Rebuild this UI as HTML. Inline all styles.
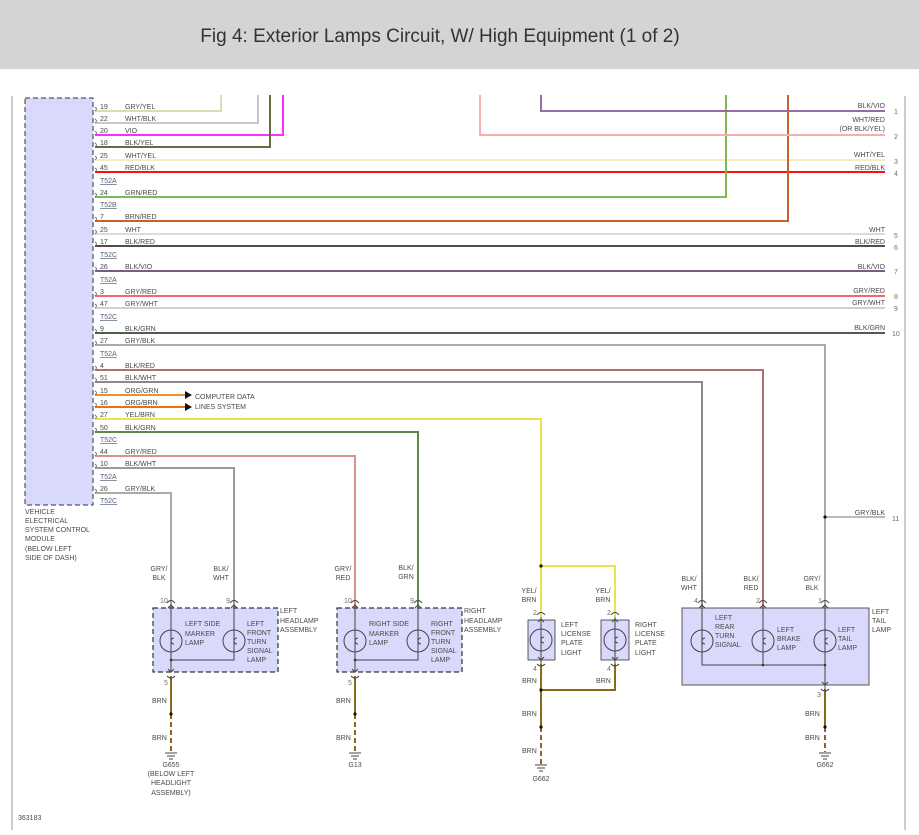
<!DOCTYPE html>
<html><head><meta charset="utf-8"><style>
html,body{margin:0;padding:0;background:#fff;}
svg{display:block;}
text{font-family:"Liberation Sans",sans-serif;font-size:7px;fill:#4a4a4a;}
.t{font-size:19px;fill:#333;}
.u{text-decoration:underline;fill:#55607a;}
.p{fill:#7a6a5a;}
</style></head><body>
<svg width="919" height="835" viewBox="0 0 919 835" xmlns="http://www.w3.org/2000/svg">
<rect x="0" y="0" width="919" height="69" fill="#d4d4d4"/>
<text class="t" x="440" y="42" text-anchor="middle">Fig 4: Exterior Lamps Circuit, W/ High Equipment (1 of 2)</text>
<line x1="12" y1="96" x2="12" y2="830" stroke="#bbb" stroke-width="1.5"/>
<line x1="905" y1="96" x2="905" y2="830" stroke="#bbb" stroke-width="1.5"/>
<rect x="25" y="98" width="68" height="407" fill="#d9d9fb" stroke="#333" stroke-width="1" stroke-dasharray="5,3"/>
<g fill="none" stroke-width="2">
<!-- top wires -->
<polyline points="95,111 221,111 221,95" stroke="#dcdcb4"/>
<polyline points="95,123 258,123 258,95" stroke="#c8c8c8"/>
<polyline points="95,135 283,135 283,95" stroke="#ff2cff"/>
<polyline points="95,147 270,147 270,95" stroke="#6a6a40"/>
<line x1="95" y1="160" x2="885" y2="160" stroke="#f2eec4"/>
<line x1="95" y1="172" x2="885" y2="172" stroke="#ff1010"/>
<polyline points="95,197 726,197 726,95" stroke="#7cba56"/>
<polyline points="95,221 788,221 788,95" stroke="#c8602c"/>
<line x1="95" y1="234" x2="885" y2="234" stroke="#dcdcdc"/>
<line x1="95" y1="246" x2="885" y2="246" stroke="#5a4a4a"/>
<line x1="95" y1="271" x2="885" y2="271" stroke="#7a5a88"/>
<line x1="95" y1="296" x2="885" y2="296" stroke="#f06868"/>
<line x1="95" y1="308" x2="885" y2="308" stroke="#d0d0d0"/>
<line x1="95" y1="333" x2="885" y2="333" stroke="#4e5e4e"/>
<polyline points="541,95 541,111 885,111" stroke="#9a6aa4"/>
<polyline points="480,95 480,135 885,135" stroke="#f4b0b0"/>
<polyline points="95,345 825,345 825,605" stroke="#aaa"/>
<polyline points="825,517 885,517" stroke="#bbb"/>
<polyline points="95,370 763,370 763,605" stroke="#b07070"/>
<polyline points="95,382 702,382 702,605" stroke="#8a8a8a"/>
<line x1="95" y1="395" x2="185" y2="395" stroke="#f0902c"/>
<line x1="95" y1="407" x2="185" y2="407" stroke="#f07010"/>
<polyline points="95,419 541,419 541,617" stroke="#eee24a"/>
<polyline points="541,566 615,566 615,617" stroke="#eee24a"/>
<polyline points="95,432 418,432 418,605" stroke="#5e8a4a"/>
<polyline points="95,456 355,456 355,605" stroke="#d89090"/>
<polyline points="95,468 234,468 234,605" stroke="#9a9a9a"/>
<polyline points="95,493 171,493 171,605" stroke="#aaa"/>
<!-- brown grounds -->
<line x1="171" y1="676" x2="171" y2="714" stroke="#8a6a1a"/>
<line x1="171" y1="714" x2="171" y2="752" stroke="#8a6a1a" stroke-dasharray="5,3"/>
<line x1="355" y1="676" x2="355" y2="714" stroke="#8a6a1a"/>
<line x1="355" y1="714" x2="355" y2="752" stroke="#8a6a1a" stroke-dasharray="5,3"/>
<polyline points="541,664 541,690 615,690 615,664" stroke="#8a6a1a"/>
<line x1="541" y1="690" x2="541" y2="727" stroke="#8a6a1a"/>
<line x1="541" y1="727" x2="541" y2="764" stroke="#8a6a1a" stroke-dasharray="5,3"/>
<line x1="825" y1="689" x2="825" y2="727" stroke="#8a6a1a"/>
<line x1="825" y1="727" x2="825" y2="752" stroke="#8a6a1a" stroke-dasharray="5,3"/>
</g>
<polygon points="185,391 192,395 185,399" fill="#111"/>
<polygon points="185,403 192,407 185,411" fill="#111"/>
<g fill="#111"><circle cx="541" cy="566" r="1.6"/><circle cx="825" cy="517" r="1.6"/><circle cx="171" cy="714" r="1.6"/><circle cx="355" cy="714" r="1.6"/><circle cx="541" cy="690" r="1.6"/><circle cx="541" cy="727" r="1.6"/><circle cx="825" cy="727" r="1.6"/></g>
<!-- connector marks -->
<g fill="none" stroke="#666" stroke-width="0.8">
<path d="M95,107 q3,2 0,4 M95,119 q3,2 0,4 M95,131 q3,2 0,4 M95,143 q3,2 0,4 M95,156 q3,2 0,4 M95,168 q3,2 0,4 M95,193 q3,2 0,4 M95,217 q3,2 0,4 M95,230 q3,2 0,4 M95,242 q3,2 0,4 M95,267 q3,2 0,4 M95,292 q3,2 0,4 M95,304 q3,2 0,4 M95,329 q3,2 0,4 M95,341 q3,2 0,4 M95,366 q3,2 0,4 M95,378 q3,2 0,4 M95,391 q3,2 0,4 M95,403 q3,2 0,4 M95,415 q3,2 0,4 M95,428 q3,2 0,4 M95,452 q3,2 0,4 M95,464 q3,2 0,4 M95,489 q3,2 0,4"/>
</g>
<g>
<text x="100" y="109">19</text><text x="125" y="109">GRY/YEL</text>
<text x="100" y="121">22</text><text x="125" y="121">WHT/BLK</text>
<text x="100" y="133">20</text><text x="125" y="133">VIO</text>
<text x="100" y="145">18</text><text x="125" y="145">BLK/YEL</text>
<text x="100" y="158">25</text><text x="125" y="158">WHT/YEL</text>
<text x="100" y="170">45</text><text x="125" y="170">RED/BLK</text>
<text class="u" x="100" y="183">T52A</text>
<text x="100" y="195">24</text><text x="125" y="195">GRN/RED</text>
<text class="u" x="100" y="207">T52B</text>
<text x="100" y="219">7</text><text x="125" y="219">BRN/RED</text>
<text x="100" y="232">25</text><text x="125" y="232">WHT</text>
<text x="100" y="244">17</text><text x="125" y="244">BLK/RED</text>
<text class="u" x="100" y="257">T52C</text>
<text x="100" y="269">26</text><text x="125" y="269">BLK/VIO</text>
<text class="u" x="100" y="282">T52A</text>
<text x="100" y="294">3</text><text x="125" y="294">GRY/RED</text>
<text x="100" y="306">47</text><text x="125" y="306">GRY/WHT</text>
<text class="u" x="100" y="319">T52C</text>
<text x="100" y="331">9</text><text x="125" y="331">BLK/GRN</text>
<text x="100" y="343">27</text><text x="125" y="343">GRY/BLK</text>
<text class="u" x="100" y="356">T52A</text>
<text x="100" y="368">4</text><text x="125" y="368">BLK/RED</text>
<text x="100" y="380">51</text><text x="125" y="380">BLK/WHT</text>
<text x="100" y="393">15</text><text x="125" y="393">ORG/GRN</text>
<text x="100" y="405">16</text><text x="125" y="405">ORG/BRN</text>
<text x="100" y="417">27</text><text x="125" y="417">YEL/BRN</text>
<text x="100" y="430">50</text><text x="125" y="430">BLK/GRN</text>
<text class="u" x="100" y="442">T52C</text>
<text x="100" y="454">44</text><text x="125" y="454">GRY/RED</text>
<text x="100" y="466">10</text><text x="125" y="466">BLK/WHT</text>
<text class="u" x="100" y="479">T52A</text>
<text x="100" y="491">26</text><text x="125" y="491">GRY/BLK</text>
<text class="u" x="100" y="503">T52C</text>
<text x="195" y="399">COMPUTER DATA</text><text x="195" y="409">LINES SYSTEM</text>
<text x="25" y="514">VEHICLE</text><text x="25" y="523">ELECTRICAL</text><text x="25" y="532">SYSTEM CONTROL</text><text x="25" y="541">MODULE</text><text x="25" y="551">(BELOW LEFT</text><text x="25" y="560">SIDE OF DASH)</text>
</g>
<g text-anchor="end">
<text x="885" y="108">BLK/VIO</text><text x="885" y="122">WHT/RED</text><text x="885" y="131">(OR BLK/YEL)</text>
<text x="885" y="157">WHT/YEL</text><text x="885" y="170">RED/BLK</text>
<text x="885" y="232">WHT</text><text x="885" y="244">BLK/RED</text>
<text x="885" y="269">BLK/VIO</text><text x="885" y="293">GRY/RED</text><text x="885" y="305">GRY/WHT</text>
<text x="885" y="330">BLK/GRN</text><text x="885" y="515">GRY/BLK</text>
</g>
<g class="p">
<text class="p" x="894" y="114">1</text><text class="p" x="894" y="139">2</text><text class="p" x="894" y="164">3</text><text class="p" x="894" y="176">4</text>
<text class="p" x="894" y="238">5</text><text class="p" x="894" y="250">6</text><text class="p" x="894" y="274">7</text><text class="p" x="894" y="299">8</text>
<text class="p" x="894" y="311">9</text><text class="p" x="892" y="336">10</text><text class="p" x="892" y="521">11</text>
</g>
<!-- component boxes -->
<g stroke="#333" stroke-width="1.2">
<rect x="153" y="608" width="125" height="64" fill="#d9d9fb" stroke-dasharray="5,3"/>
<rect x="337" y="608" width="125" height="64" fill="#d9d9fb" stroke-dasharray="5,3"/>
<rect x="528" y="620" width="27" height="40" fill="#d9d9fb" stroke-width="0.8"/>
<rect x="601" y="620" width="28" height="40" fill="#d9d9fb" stroke-width="0.8"/>
<rect x="682" y="608" width="187" height="77" fill="#d9d9fb" stroke-width="0.8"/>
</g>
<g fill="none" stroke="#444" stroke-width="1">
<path d="M171,605 V672 M234,605 V660 H171 M355,605 V672 M418,605 V660 H355 M541,617 V664 M615,617 V664 M702,605 V665 H825 M763,605 V665 M825,605 V689"/>
<path d="M168,608 l3,-3 3,3 M231,608 l3,-3 3,3 M352,608 l3,-3 3,3 M415,608 l3,-3 3,3 M538,622 l3,-3 3,3 M612,622 l3,-3 3,3 M699,608 l3,-3 3,3 M760,608 l3,-3 3,3 M822,608 l3,-3 3,3 M168,669 l3,3 3,-3 M352,669 l3,3 3,-3 M538,657 l3,3 3,-3 M612,657 l3,3 3,-3 M822,682 l3,3 3,-3"/>
<path d="M167,603 q4,-5 8,0 M230,603 q4,-5 8,0 M351,603 q4,-5 8,0 M414,603 q4,-5 8,0 M537,615 q4,-5 8,0 M611,615 q4,-5 8,0 M698,603 q4,-5 8,0 M759,603 q4,-5 8,0 M821,603 q4,-5 8,0 M167,676 q4,4 8,0 M351,676 q4,4 8,0 M537,664 q4,4 8,0 M611,664 q4,4 8,0 M821,689 q4,4 8,0"/>
<circle cx="171" cy="641" r="11"/><circle cx="234" cy="641" r="11"/><circle cx="355" cy="641" r="11"/><circle cx="418" cy="641" r="11"/>
<circle cx="541" cy="640" r="11"/><circle cx="615" cy="640" r="11"/><circle cx="702" cy="641" r="11"/><circle cx="763" cy="641" r="11"/><circle cx="825" cy="641" r="11"/>
<path d="M174,638 a3,3 0 1,0 0,6 M237,638 a3,3 0 1,0 0,6 M358,638 a3,3 0 1,0 0,6 M421,638 a3,3 0 1,0 0,6 M544,637 a3,3 0 1,0 0,6 M618,637 a3,3 0 1,0 0,6 M705,638 a3,3 0 1,0 0,6 M766,638 a3,3 0 1,0 0,6 M828,638 a3,3 0 1,0 0,6"/>
<path d="M165,753 h12 M167,756 h8 M169,759 h4 M349,753 h12 M351,756 h8 M353,759 h4 M535,765 h12 M537,768 h8 M539,771 h4 M819,753 h12 M821,756 h8 M823,759 h4"/>
</g>
<g fill="#333"><circle cx="171" cy="660" r="1.3"/><circle cx="355" cy="660" r="1.3"/><circle cx="763" cy="665" r="1.3"/><circle cx="825" cy="665" r="1.3"/></g>
<g>
<text x="159" y="571" text-anchor="middle">GRY/</text><text x="159" y="580" text-anchor="middle">BLK</text>
<text x="221" y="571" text-anchor="middle">BLK/</text><text x="221" y="580" text-anchor="middle">WHT</text>
<text x="343" y="571" text-anchor="middle">GRY/</text><text x="343" y="580" text-anchor="middle">RED</text>
<text x="406" y="570" text-anchor="middle">BLK/</text><text x="406" y="579" text-anchor="middle">GRN</text>
<text x="529" y="593" text-anchor="middle">YEL/</text><text x="529" y="602" text-anchor="middle">BRN</text>
<text x="603" y="593" text-anchor="middle">YEL/</text><text x="603" y="602" text-anchor="middle">BRN</text>
<text x="689" y="581" text-anchor="middle">BLK/</text><text x="689" y="590" text-anchor="middle">WHT</text>
<text x="751" y="581" text-anchor="middle">BLK/</text><text x="751" y="590" text-anchor="middle">RED</text>
<text x="812" y="581" text-anchor="middle">GRY/</text><text x="812" y="590" text-anchor="middle">BLK</text>
<text class="p" x="160" y="603">10</text><text class="p" x="226" y="603">9</text><text class="p" x="344" y="603">10</text><text class="p" x="410" y="603">9</text>
<text class="p" x="533" y="615">2</text><text class="p" x="607" y="615">2</text><text class="p" x="694" y="603">4</text><text class="p" x="756" y="603">2</text><text class="p" x="818" y="603">1</text>
<text class="p" x="164" y="685">5</text><text class="p" x="348" y="685">5</text><text class="p" x="533" y="671">4</text><text class="p" x="607" y="671">4</text><text class="p" x="817" y="697">3</text>
<text x="185" y="626">LEFT SIDE</text><text x="185" y="636">MARKER</text><text x="185" y="645">LAMP</text>
<text x="247" y="626">LEFT</text><text x="247" y="635">FRONT</text><text x="247" y="644">TURN</text><text x="247" y="653">SIGNAL</text><text x="247" y="662">LAMP</text>
<text x="280" y="613">LEFT</text><text x="280" y="623">HEADLAMP</text><text x="280" y="632">ASSEMBLY</text>
<text x="369" y="626">RIGHT SIDE</text><text x="369" y="636">MARKER</text><text x="369" y="645">LAMP</text>
<text x="431" y="626">RIGHT</text><text x="431" y="635">FRONT</text><text x="431" y="644">TURN</text><text x="431" y="653">SIGNAL</text><text x="431" y="662">LAMP</text>
<text x="464" y="613">RIGHT</text><text x="464" y="623">HEADLAMP</text><text x="464" y="632">ASSEMBLY</text>
<text x="561" y="627">LEFT</text><text x="561" y="636">LICENSE</text><text x="561" y="645">PLATE</text><text x="561" y="655">LIGHT</text>
<text x="635" y="627">RIGHT</text><text x="635" y="636">LICENSE</text><text x="635" y="645">PLATE</text><text x="635" y="655">LIGHT</text>
<text x="715" y="620">LEFT</text><text x="715" y="629">REAR</text><text x="715" y="638">TURN</text><text x="715" y="647">SIGNAL</text>
<text x="777" y="632">LEFT</text><text x="777" y="641">BRAKE</text><text x="777" y="650">LAMP</text>
<text x="838" y="632">LEFT</text><text x="838" y="641">TAIL</text><text x="838" y="650">LAMP</text>
<text x="872" y="614">LEFT</text><text x="872" y="623">TAIL</text><text x="872" y="632">LAMP</text>
<text x="152" y="703">BRN</text><text x="152" y="740">BRN</text><text x="336" y="703">BRN</text><text x="336" y="740">BRN</text>
<text x="522" y="683">BRN</text><text x="596" y="683">BRN</text><text x="522" y="716">BRN</text><text x="522" y="753">BRN</text>
<text x="805" y="716">BRN</text><text x="805" y="740">BRN</text>
<text x="171" y="767" text-anchor="middle">G655</text><text x="171" y="776" text-anchor="middle">(BELOW LEFT</text><text x="171" y="785" text-anchor="middle">HEADLIGHT</text><text x="171" y="795" text-anchor="middle">ASSEMBLY)</text>
<text x="355" y="767" text-anchor="middle">G13</text><text x="541" y="781" text-anchor="middle">G662</text><text x="825" y="767" text-anchor="middle">G662</text>
<text x="18" y="820">363183</text>
</g>
</svg>
</body></html>
